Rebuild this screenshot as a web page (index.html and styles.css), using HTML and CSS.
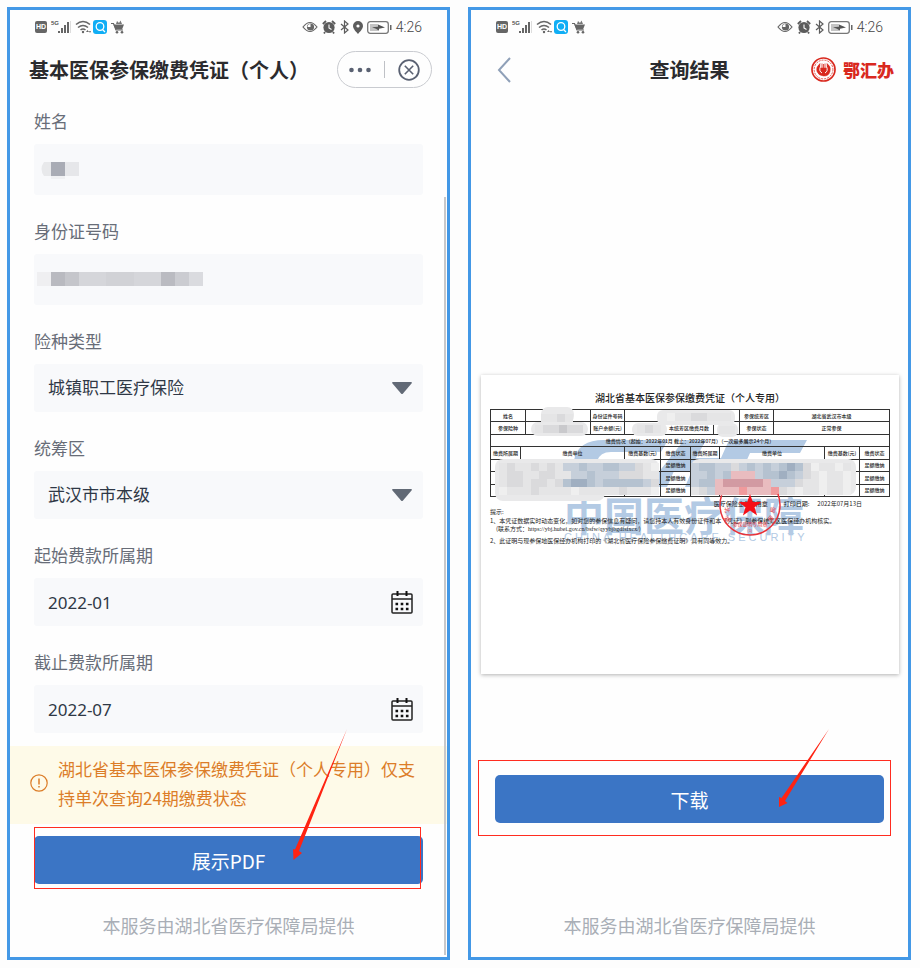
FILE: index.html
```html
<!DOCTYPE html>
<html lang="zh-CN">
<head>
<meta charset="utf-8">
<meta name="viewport" content="width=device-width, initial-scale=1">
<title>基本医保参保缴费凭证</title>
<link rel="stylesheet" href="styles.css">
</head>
<body>
<svg class="sprite" aria-hidden="true">
  <symbol id="signals" viewBox="0 0 92 16">
    <rect x="0" y="2" width="12" height="12" rx="2" fill="#666"/>
    <text x="6" y="10" font-size="7" font-weight="700" fill="#fff" text-anchor="middle">HD</text>
    <text x="16" y="6" font-size="6" font-weight="700" fill="#555">5G</text>
    <g fill="#666"><rect x="23" y="12" width="2" height="2"/><rect x="26" y="9" width="2" height="5"/><rect x="29" y="6" width="2" height="8"/><rect x="32" y="3" width="2" height="11"/></g>
    <rect x="35" y="2" width="1" height="12" fill="#ddd"/>
    <g fill="none" stroke="#666" stroke-width="1.6"><path d="M41 5.5Q48 -.5 55 5.5M43 8.500Q48 4.500 53 8.500M45.500 11Q48 9 50.500 11"/></g>
    <circle cx="48" cy="13" r="1.200" fill="#666"/><path d="M51 13l1.500-2 1.500 2zM54 12l1 2 1-2z" fill="#666"/>
    <rect x="58" y="1" width="14" height="14" rx="3" fill="#10aef5"/>
    <circle cx="65" cy="7.500" r="3.800" fill="none" stroke="#fff" stroke-width="1.300"/><path d="M67.500 10.500l2.500 2.500" stroke="#fff" stroke-width="1.300"/>
    <path d="M76 4.500h2.500l2.500 6.500h7" fill="none" stroke="#666" stroke-width="1.200"/>
    <path d="M78.500 5.500h10.500l-2 5h-6.500z" fill="#666"/>
    <path d="M81 5l1-3 2 2 1.500-2.500L87 5z" fill="#777"/><circle cx="82" cy="13.300" r="1.300" fill="#666"/><circle cx="87" cy="13.300" r="1.300" fill="#666"/>
  </symbol>
  <symbol id="eye" viewBox="0 0 16 12"><path d="M1 6Q8-3 15 6Q8 15 1 6Z" fill="none" stroke="#666" stroke-width="1.200"/><circle cx="8.500" cy="6" r="3.600" fill="#666"/><path d="M8.500 6V3A3 3 0 0 0 5.500 6Z" fill="#fff"/></symbol>
  <symbol id="alarm" viewBox="0 0 14 14"><circle cx="7" cy="7.500" r="5.600" fill="#5c5c5c"/><path d="M.8 4l3.200-3M13.200 4l-3.200-3M3 12l-1 1.500M11 12l1 1.500" stroke="#5c5c5c" stroke-width="1.800"/><path d="M7 4.500V8l2.500 1.500" fill="none" stroke="#fff" stroke-width="1.100"/></symbol>
  <symbol id="bluetooth" viewBox="0 0 9 14"><path d="M1 4l7 6-3.500 3V1L8 4 1 10" fill="none" stroke="#5c5c5c" stroke-width="1.200"/></symbol>
  <symbol id="pin" viewBox="0 0 10 13"><path d="M5 0a5 5 0 0 1 5 5c0 3-3.500 6-5 8C3.500 11 0 8 0 5a5 5 0 0 1 5-5z" fill="#5c5c5c"/><circle cx="5" cy="5" r="1.600" fill="#fff"/></symbol>
  <symbol id="battery" viewBox="0 0 25 13"><rect x=".7" y=".7" width="20.600" height="11.600" rx="2.500" fill="#fff" stroke="#777" stroke-width="1.300"/><rect x="3" y="3" width="8" height="7" fill="#c4c4c4"/><path d="M5 6.200l6-.4V3.500l7 3-6 1.200v2l-3-2z" fill="#555"/><rect x="23" y="4" width="1.500" height="5" fill="#666"/></symbol>
  <symbol id="calendar" viewBox="0 0 22 23"><path d="M2 3h18a1 1 0 0 1 1 1v17a1 1 0 0 1-1 1H2a1 1 0 0 1-1-1V4a1 1 0 0 1 1-1zM1 8h20" fill="none" stroke="#222" stroke-width="1.500"/><path d="M6.500 0v5M15.500 0v5" stroke="#111" stroke-width="2"/><path d="M4.500 13h13M4.500 18h13" stroke="#111" stroke-width="2.600" stroke-dasharray="2.600"/></symbol>
</svg>

<main class="screens">
  <section class="phone phone-form">
    <div class="status">
      <svg class="signals"><use href="#signals"/></svg>
      <div class="status-right">
        <svg class="i-eye"><use href="#eye"/></svg>
        <svg class="i-alarm"><use href="#alarm"/></svg>
        <svg class="i-bt"><use href="#bluetooth"/></svg>
        <svg class="i-pin"><use href="#pin"/></svg>
        <svg class="i-battery"><use href="#battery"/></svg>
        <span class="time">4:26</span>
      </div>
    </div>
    <header class="bar bar-form">
      <h1>基本医保参保缴费凭证（个人）</h1>
      <div class="capsule">
        <button type="button" aria-label="更多"><svg width="22" height="6" viewBox="0 0 22 6" fill="#5a6172"><circle cx="2.500" cy="3" r="2.300"/><circle cx="11" cy="3" r="2.300"/><circle cx="19.500" cy="3" r="2.300"/></svg></button>
        <i></i>
        <button type="button" aria-label="关闭"><svg width="22" height="22" viewBox="0 0 22 22" fill="none" stroke="#5a6172"><circle cx="11" cy="11" r="9.800" stroke-width="1.800"/><path d="M6.800 6.800l8.400 8.400M15.200 6.800l-8.400 8.400" stroke-width="1.600"/></svg></button>
      </div>
    </header>

    <form class="form">
      <div class="field tall">
        <label for="name">姓名</label>
        <div class="control">
          <input id="name" type="text">
          <svg class="mask" width="40" height="22" viewBox="0 0 40 22" aria-hidden="true"><path d="M4 3h9v14H4q-5-7 0-14z" fill="#e8e9eb"/><rect x="11" y="17" width="14" height="3" fill="#f0f1f3"/><rect x="25" y="3" width="14" height="14" fill="#e6e7ea"/><rect x="11" y="3" width="14" height="14" fill="#a9acb5"/></svg>
        </div>
      </div>
      <div class="field tall">
        <label for="idno">身份证号码</label>
        <div class="control">
          <input id="idno" type="text">
          <svg class="mask mask-id" width="166" height="16" viewBox="0 0 166 16" aria-hidden="true"><rect width="14" height="14" fill="#efeff1"/><rect x="14" width="14" height="14" fill="#b9bac0"/><rect x="28" width="14" height="14" fill="#c5c6cb"/><rect x="42" width="82" height="14" fill="#d5d6da"/><rect x="69" width="28" height="14" fill="#d1d2d6"/><rect x="124" width="14" height="14" fill="#babbc1"/><rect x="138" width="14" height="14" fill="#cbccd1"/><rect x="152" width="14" height="14" fill="#dadbdf"/></svg>
        </div>
      </div>
      <div class="field">
        <label for="type">险种类型</label>
        <div class="control">
          <select id="type"><option>城镇职工医疗保险</option></select>
          <svg class="caret" width="20" height="12" viewBox="0 0 20 12" aria-hidden="true"><path d="M1 0h18q1.500 0 .5 1.500L11 11.500q-1 1-2 0L.5 1.500Q-.5 0 1 0z" fill="#626a76"/></svg>
        </div>
      </div>
      <div class="field">
        <label for="area">统筹区</label>
        <div class="control">
          <select id="area"><option>武汉市市本级</option></select>
          <svg class="caret" width="20" height="12" viewBox="0 0 20 12" aria-hidden="true"><path d="M1 0h18q1.500 0 .5 1.500L11 11.500q-1 1-2 0L.5 1.500Q-.5 0 1 0z" fill="#626a76"/></svg>
        </div>
      </div>
      <div class="field">
        <label for="from">起始费款所属期</label>
        <div class="control"><input id="from" type="text" value="2022-01"><svg class="cal"><use href="#calendar"/></svg></div>
      </div>
      <div class="field">
        <label for="to">截止费款所属期</label>
        <div class="control"><input id="to" type="text" value="2022-07"><svg class="cal"><use href="#calendar"/></svg></div>
      </div>
    </form>

    <div class="notice">
      <svg width="18" height="18" viewBox="0 0 18 18" fill="none" stroke="#dc7d28"><circle cx="9" cy="9" r="8.200" stroke-width="1.200"/><path d="M9 4.500v6M9 12v1.600" stroke-width="1.500"/></svg>
      <p>湖北省基本医保参保缴费凭证（个人专用）仅支持单次查询24期缴费状态</p>
    </div>
    <div class="action action-pdf">
      <button class="primary" type="button">展示PDF</button>
      <span class="frame"></span>
      <svg class="arrow" width="56" height="132" viewBox="0 0 56 132" aria-hidden="true"><path d="M55 0L7 122l3 2-8.500 7-.5-11 2 .5z" fill="#ff2312"/></svg>
    </div>
    <footer>本服务由湖北省医疗保障局提供</footer>
    <span class="scrollbar"></span>
  </section>

  <section class="phone">
    <div class="status">
      <svg class="signals"><use href="#signals"/></svg>
      <div class="status-right">
        <svg class="i-eye"><use href="#eye"/></svg>
        <svg class="i-alarm"><use href="#alarm"/></svg>
        <svg class="i-bt"><use href="#bluetooth"/></svg>
        <svg class="i-battery"><use href="#battery"/></svg>
        <span class="time">4:26</span>
      </div>
    </div>
    <header class="bar bar-result">
      <button type="button" class="back" aria-label="返回"><svg width="14" height="26" viewBox="0 0 14 26"><path d="M13 1L2 13l11 12" fill="none" stroke="#8fa0b8" stroke-width="2"/></svg></button>
      <h2>查询结果</h2>
      <div class="brand">
        <svg width="25" height="25" viewBox="0 0 25 25" fill="none" stroke="#d9281e"><circle cx="12.500" cy="12.500" r="11.500" stroke-width="1.700"/><circle cx="12.500" cy="12.500" r="9.400" stroke-width=".8" stroke-dasharray="2 1"/><path d="M9 6.500q-4.500 4-3 8t6.500 4.500 6.500-4.500-3-8q.5 3-.5 4.500H9.500Q8.500 9.500 9 6.500z" fill="#d9281e" stroke-width=".5"/><path d="M9.500 9.500q-2 4.500 1.500 6.500M15.500 9.500q2 4.500-1.500 6.500" stroke="#fff" stroke-width="1"/><path d="M11 6.500v8M12.500 7v8M14 6.500v8" stroke-width=".8"/></svg>
        <span>鄂汇办</span>
      </div>
    </header>

    <article class="doc">
      <svg class="layer watermark" viewBox="0 0 418 299" aria-hidden="true">
        <g fill="#b3cae4">
          <path d="M93 85Q97 65 123 65h64l-7 12h-50q-11 0-14 9l-4 13h67v13H85z"/>
          <path d="M203 65h22l-10 18h25l8-18h78l-7 13h-50l-4 9h44l-11 25h-94l5-12h72l2-4h-90l-7 16h-20z"/>
          <text x="83" y="156" font-size="40" font-weight="700">中国医疗保障</text>
          <text class="en" x="83" y="166" font-size="11">CHINA HEALTHCARE SECURITY</text>
        </g>
      </svg>
      <h3>湖北省基本医保参保缴费凭证（个人专用）</h3>
      <table>
        <colgroup>
          <col class="c30"><col class="c5"><col class="c65"><col class="c34"><col class="c36"><col class="c4"><col class="c26"><col class="c23"><col class="c6"><col class="c20"><col class="c34"><col class="c51"><col class="c35"><col class="c30">
        </colgroup>
        <tbody>
          <tr><th colspan="2">姓名</th><td></td><th>身份证件号码</th><td colspan="6"></td><th>参保统筹区</th><td colspan="3">湖北省武汉市本级</td></tr>
          <tr><th colspan="2">参保险种</th><td></td><th>账户余额(元)</th><td colspan="2"></td><th colspan="2">本统筹区缴费月数</th><td colspan="2"></td><th>参保状态</th><td colspan="3">正常参保</td></tr>
          <tr><td colspan="14">缴费情况（起始：2022年01月 截止：2022年07月）（一次最多展示24个月）</td></tr>
          <tr><th>缴费所属期</th><th colspan="3">缴费单位</th><th>缴费基数(元)</th><th colspan="2">缴费状态</th><th colspan="2">缴费所属期</th><th colspan="3">缴费单位</th><th>缴费基数(元)</th><th>缴费状态</th></tr>
          <tr><td></td><td colspan="3"></td><td></td><td colspan="2">足额缴纳</td><td colspan="2"></td><td colspan="3"></td><td></td><td>足额缴纳</td></tr>
          <tr><td></td><td colspan="3"></td><td></td><td colspan="2">足额缴纳</td><td colspan="2"></td><td colspan="3"></td><td></td><td>足额缴纳</td></tr>
          <tr><td></td><td colspan="3"></td><td></td><td colspan="2">足额缴纳</td><td colspan="2"></td><td colspan="3"></td><td></td><td>足额缴纳</td></tr>
        </tbody>
      </table>
      <div class="issued"><span>医疗保险业务专用章</span><span>打印日期:</span><span>2022年07月13日</span></div>
      <p>提示:</p>
      <p class="note">1、本凭证数据实时动态变化，如对您的参保信息有疑问，请您持本人有效身份证件和本《凭证》到参保统筹区医保经办机构核实。<br><span class="contact">(联系方式：<span class="url">https://ybj.hubei.gov.cn/bsfw/qyybjbgdfsfxcx/</span>)</span></p>
      <p class="note note-last">2、此证明与现参保地医保经办机构打印的《湖北省医疗保险参保缴费证明》具有同等效力。</p>
      <svg class="layer" viewBox="0 0 418 299" aria-hidden="true">
        <g fill="#e9e9ea">
          <rect x="60" y="32" width="33" height="16" rx="7"/><rect x="50" y="47" width="57" height="14" rx="7"/>
          <rect x="176" y="35" width="78" height="15" rx="6"/><rect x="151" y="48" width="35" height="13" rx="6"/><rect x="236" y="48" width="21" height="14" rx="6"/>
          <rect x="14" y="84" width="164" height="36" rx="8"/><rect x="14" y="108" width="110" height="18" rx="8"/><rect x="210" y="84" width="165" height="36" rx="8"/>
        </g>
        <g data-mosaic="bbcb" data-x="60" data-y="39"></g>
        <g data-mosaic="bccdcc" data-x="54" data-y="50"></g>
        <g data-mosaic="bcb" data-x="156" data-y="50"></g>
        <g data-mosaic="abbccbbb" data-x="186" data-y="38"></g>
        <g data-mosaic="bb" data-x="238" data-y="51"></g>
        <g data-mosaic="bcbbcbcbeefeeffeecba/bccbbccbbeefeeecccbb/bccbccbcfggfefffffec/abbbcbbbbabbbbbcbbba" data-x="18" data-y="88"></g>
        <g data-mosaic="effeecefefefgfcabbab/eefefpppeffgfecbabba/effpqqqqqpeeecbbabba/bceppprppprcbabbabba" data-x="210" data-y="88"></g>
        <g>
          <circle cx="269" cy="130" r="30" fill="none" stroke="#e8323a" stroke-width="1.500" stroke-dasharray="116 73" stroke-dashoffset="12"/>
          <path d="M269 119l2.800 8h8.600l-6.900 5.200 2.600 8.300-7.100-5-7.100 5 2.600-8.300-6.900-5.200h8.600z" fill="#f50f18"/>
          <text x="269" y="151" font-size="5" text-anchor="middle" fill="#e8323a">参保证明专用章</text>
          <text x="269" y="157" font-size="4" text-anchor="middle" fill="#e8323a">(1)</text>
          <g fill="#e8323a" font-size="6"><text x="243" y="137" transform="rotate(80 246 135)">北</text><text x="243" y="146" transform="rotate(50 246 144)">湖</text><text x="289" y="137" transform="rotate(-80 292 135)">局</text><text x="287" y="146" transform="rotate(-50 290 144)">保</text></g>
        </g>
      </svg>
    </article>

    <div class="action action-download">
      <button class="primary" type="button">下载</button>
      <span class="frame"></span>
      <svg class="arrow" width="52" height="79" viewBox="0 0 52 79" aria-hidden="true"><path d="M51 0L7 72l2.500 2L1 78V68l2.500 1z" fill="#ff2312"/></svg>
    </div>
    <footer>本服务由湖北省医疗保障局提供</footer>
  </section>
</main>
<script src="script.js"></script>
</body>
</html>
```
FILE: styles.css
```css
* { box-sizing: border-box; }

body {
  margin: 0;
  padding: 7px 9px 8px 7px;
  background: #fdfdfd;
  color: #2b2b2e;
  font-family: "Noto Sans CJK SC", "Noto Sans", sans-serif;
}

h1, h2, h3, p { margin: 0; }
button { border: 0; padding: 0; background: none; font-family: inherit; cursor: pointer; }
svg { display: block; flex: none; }
.sprite { display: none; }

.screens {
  display: grid;
  grid-template-columns: 1fr 1fr;
  gap: 18px;
}

.phone {
  position: relative;
  display: flex;
  flex-direction: column;
  min-width: 0;
  border: 3px solid #4398e6;
  background: #fefefe;
}

/* Status bar */
.status {
  display: flex;
  justify-content: space-between;
  align-items: center;
  height: 34px;
  padding: 0 25px;
}
.signals { width: 92px; height: 16px; font-family: "Liberation Sans", sans-serif; }
.status-right { display: flex; align-items: center; gap: 4px; }
.i-eye { width: 16px; height: 12px; }
.i-alarm { width: 14px; height: 14px; }
.i-bt { width: 9px; height: 14px; }
.i-pin { width: 10px; height: 13px; }
.i-battery { width: 25px; height: 13px; }
.time { font: 300 14px/20px Roboto, sans-serif; color: #444; }

/* Title bars */
.bar { height: 51px; align-items: center; }
h1, h2 { font-size: 20px; line-height: 30px; font-weight: 700; white-space: nowrap; }
.bar-form { display: flex; justify-content: space-between; padding: 0 15px 0 19px; }
.capsule {
  display: flex;
  align-items: center;
  justify-content: space-between;
  width: 95px;
  height: 37px;
  padding: 0 11px;
  border: 1px solid #c9cbd0;
  border-radius: 19px;
}
.capsule i { width: 1px; height: 17px; background: #bfc1c6; }
.bar-result {
  display: grid;
  grid-template-columns: 1fr auto 1fr;
  padding: 0 14px;
}
.back { justify-self: start; padding-left: 12px; }
.brand { display: flex; align-items: center; justify-self: end; gap: 7px; }
.brand span { color: #d9281e; font-size: 17px; line-height: 25px; font-weight: 900; }

/* Form */
.form { padding: 14px 24px 13px; }
.field + .field { margin-top: 24px; }
label {
  display: block;
  margin-bottom: 11px;
  font-size: 17px;
  line-height: 24px;
  color: #686d78;
}
.control { position: relative; display: flex; align-items: center; }
input, select {
  width: 100%;
  height: 48px;
  margin: 0;
  padding: 0 40px 0 14px;
  border: 0;
  border-radius: 3px;
  background: #f8f9fb;
  color: #2f3846;
  font: 17px/24px "Noto Sans", "Noto Sans CJK SC", sans-serif;
  appearance: none;
}
.tall input { height: 51px; }
.mask { position: absolute; left: 6px; }
.mask-id { left: 3px; }
.caret { position: absolute; right: 11px; }
.cal { position: absolute; right: 10px; width: 22px; height: 23px; }

.notice {
  display: flex;
  align-items: center;
  gap: 10px;
  padding: 8px 24px 12px 20px;
  background: #fefae8;
  color: #dc7d28;
  font-size: 17px;
  line-height: 29px;
}

/* Actions */
.action { position: relative; margin: 0 24px; }
.action-pdf { margin-top: 12px; }
.action-download { margin-top: 101px; }
.primary {
  display: block;
  width: 100%;
  height: 48px;
  border-radius: 5px;
  background: #3b75c5;
  color: #fff;
  font-size: 19px;
}
.frame { position: absolute; border: 1px solid #ff2c20; pointer-events: none; }
.action-pdf .frame { inset: -9px 2px -5px 0; }
.action-download .frame { inset: -15px -7px -13px -17px; }
.arrow { position: absolute; pointer-events: none; }
.action-pdf .arrow { right: 75px; top: -107px; }
.action-download .arrow { right: 54px; top: -46px; }

footer {
  margin-top: auto;
  padding: 28px 0 18px;
  text-align: center;
  font-size: 18px;
  line-height: 27px;
  color: #a9aeb6;
}
.scrollbar {
  position: absolute;
  top: 187px;
  right: 1px;
  bottom: 2px;
  width: 2px;
  background: #c8c8ca;
}

/* Certificate */
.doc {
  position: relative;
  min-height: 299px;
  margin: 280px 9px 0 10px;
  padding: 16px 9px 0;
  background: #fff;
  box-shadow: 0 1px 4px rgba(0, 0, 0, .3);
  color: #222;
  font-size: 6px;
  line-height: 8px;
}
.doc > * { position: relative; }
.doc > .layer { position: absolute; top: 0; left: 0; width: 100%; height: auto; }
.watermark .en { font-family: "Liberation Sans", sans-serif; letter-spacing: 3px; }
.doc h3 { font-size: 10px; line-height: 14px; font-weight: 500; text-align: center; }
.doc table {
  width: 100%;
  height: 88px;
  margin-top: 4px;
  border-collapse: collapse;
  table-layout: fixed;
}
.doc th, .doc td {
  padding: 0;
  border: 1px solid #333;
  font-size: 5px;
  line-height: 8px;
  font-weight: 500;
  text-align: center;
  white-space: nowrap;
}
.c4 { width: 4px; }
.c5 { width: 5px; }
.c6 { width: 6px; }
.c20 { width: 20px; }
.c23 { width: 23px; }
.c26 { width: 26px; }
.c30 { width: 30px; }
.c34 { width: 34px; }
.c35 { width: 35px; }
.c36 { width: 36px; }
.c51 { width: 51px; }
.c65 { width: 65px; }
.issued {
  display: flex;
  justify-content: flex-end;
  gap: 8px;
  margin-top: 3px;
  padding-right: 28px;
}
.issued span:first-child { margin-right: 8px; }
.doc .note { margin-top: 1px; white-space: nowrap; }
.doc .note-last { margin-top: 4px; }
.contact { padding-left: 6px; }
.url { font-family: "Liberation Serif", serif; }
```
FILE: script.js
```js
// Fills each [data-mosaic] group with 8px squares; rows are split by "/".
const shades = {
  a: '#efefef', b: '#e5e5e6', c: '#dadadc', d: '#c9c9cc', e: '#c6cfda',
  f: '#b5c2d0', g: '#a0afc1', p: '#e9bcbf', q: '#d29aa2', r: '#f09a9c'
};
document.querySelectorAll('[data-mosaic]').forEach(group => {
  const left = Number(group.dataset.x);
  const top = Number(group.dataset.y);
  group.dataset.mosaic.split('/').forEach((row, r) => {
    [...row].forEach((key, c) => {
      const cell = document.createElementNS('http://www.w3.org/2000/svg', 'rect');
      cell.setAttribute('x', left + c * 8);
      cell.setAttribute('y', top + r * 8);
      cell.setAttribute('width', 8);
      cell.setAttribute('height', 8);
      cell.setAttribute('fill', shades[key]);
      group.appendChild(cell);
    });
  });
});
```
